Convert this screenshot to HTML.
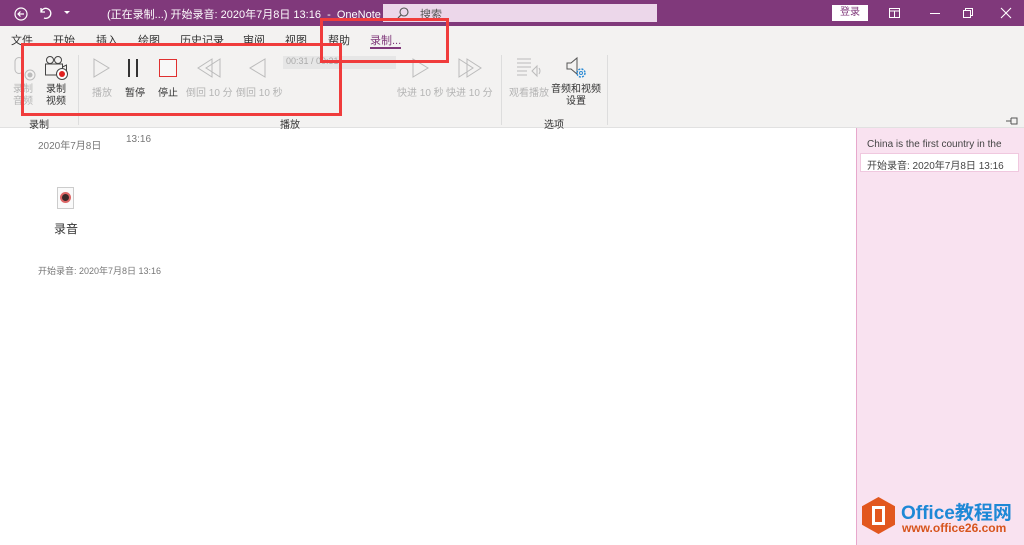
<!DOCTYPE html>
<html><head><meta charset="utf-8"><style>
*{margin:0;padding:0;box-sizing:border-box}
body{width:1024px;height:545px;overflow:hidden;background:#fff;font-family:"Liberation Sans","Noto Sans CJK SC",sans-serif;position:relative;font-size:10px;color:#333}
.a{position:absolute;white-space:nowrap}
.g{color:#b4b4b4}
svg{position:absolute;overflow:visible}
</style></head><body>
<div class="a" style="left:0;top:0;width:1024px;height:26px;background:#80397b"></div>
<svg style="left:14px;top:7px" width="14" height="14"><circle cx="7" cy="7" r="6" fill="none" stroke="#fff" stroke-width="1.2"/><path d="M10 7H4M6.5 4.5L4 7l2.5 2.5" fill="none" stroke="#fff" stroke-width="1.2"/></svg>
<svg style="left:38px;top:6px" width="14" height="14"><path d="M3 2v4h4M3 6a5 5 0 1 1 3 6" fill="none" stroke="#fff" stroke-width="1.3"/></svg>
<svg style="left:64px;top:11px" width="7" height="5"><path d="M0 0h6L3 3z" fill="#fff"/></svg>
<div class="a" style="left:107px;top:6px;color:#fff;font-size:11px">(正在录制...) 开始录音: 2020年7月8日 13:16 &nbsp;- &nbsp;OneNote</div>
<div class="a" style="left:383px;top:4px;width:274px;height:18px;background:#ecd7ea"></div>
<svg style="left:397px;top:7px" width="12" height="12"><circle cx="7" cy="5" r="4" fill="none" stroke="#555" stroke-width="1.1"/><path d="M4 8L1 11" stroke="#555" stroke-width="1.2"/></svg>
<div class="a" style="left:420px;top:6px;font-size:11px;color:#555">搜索</div>
<div class="a" style="left:832px;top:5px;width:36px;height:16px;background:#fff;color:#80397b;font-size:10px;text-align:center;line-height:16px">登录</div>
<svg style="left:889px;top:8px" width="11" height="10"><rect x="0.5" y="0.5" width="10" height="9" fill="none" stroke="#fff"/><path d="M0 3h11M5.5 3v6" stroke="#fff"/></svg>
<div class="a" style="left:930px;top:13px;width:10px;height:1px;background:#fff"></div>
<svg style="left:963px;top:8px" width="10" height="10"><rect x="0.5" y="2.5" width="7" height="7" fill="none" stroke="#fff"/><path d="M2.5 2.5v-2h7v7h-2" fill="none" stroke="#fff"/></svg>
<svg style="left:1001px;top:8px" width="10" height="10"><path d="M0 0L10 10M10 0L0 10" stroke="#fff" stroke-width="1.1"/></svg>
<div class="a" style="left:0;top:26px;width:1024px;height:102px;background:#f3f2f1;border-bottom:1px solid #e1e1e1"></div>
<div class="a" style="left:11px;top:32px;font-size:11px">文件</div>
<div class="a" style="left:53px;top:32px;font-size:11px">开始</div>
<div class="a" style="left:96px;top:32px;font-size:11px">插入</div>
<div class="a" style="left:138px;top:32px;font-size:11px">绘图</div>
<div class="a" style="left:180px;top:32px;font-size:11px">历史记录</div>
<div class="a" style="left:243px;top:32px;font-size:11px">审阅</div>
<div class="a" style="left:285px;top:32px;font-size:11px">视图</div>
<div class="a" style="left:328px;top:32px;font-size:11px">帮助</div>
<div class="a" style="left:370px;top:32px;font-size:11px;color:#80397b">录制...</div>
<div class="a" style="left:370px;top:47px;width:31px;height:2px;background:#80397b"></div>
<!-- ribbon -->
<svg style="left:14px;top:57px" width="24" height="24"><rect x="1" y="0.5" width="8" height="16" rx="4" fill="none" stroke="#bbb"/><circle cx="16" cy="18" r="5" fill="none" stroke="#bbb"/><circle cx="16" cy="18" r="2.5" fill="#bbb"/></svg>
<div class="a g" style="left:13px;top:84px;line-height:12px">录制<br>音频</div>
<svg style="left:44px;top:56px" width="26" height="26"><circle cx="6" cy="4" r="3.5" fill="none" stroke="#444"/><circle cx="14" cy="4" r="3.5" fill="none" stroke="#444"/><rect x="1.5" y="8" width="17" height="11" fill="none" stroke="#444"/><path d="M18.5 11l4-2v7l-4-2" fill="none" stroke="#444"/><circle cx="18" cy="18" r="5.5" fill="#fff" stroke="#444"/><circle cx="18" cy="18" r="3" fill="#e02020"/></svg>
<div class="a" style="left:46px;top:84px;line-height:12px">录制<br>视频</div>
<div class="a" style="left:29px;top:116px">录制</div>
<div class="a" style="left:78px;top:55px;width:1px;height:70px;background:#ddd"></div>
<svg style="left:93px;top:58px" width="18" height="20"><path d="M1 1L16 10L1 19z" fill="none" stroke="#bbb"/></svg>
<div class="a g" style="left:92px;top:84px">播放</div>
<div class="a" style="left:128px;top:59px;width:2px;height:18px;background:#333"></div>
<div class="a" style="left:136px;top:59px;width:2px;height:18px;background:#333"></div>
<div class="a" style="left:125px;top:84px">暂停</div>
<div class="a" style="left:159px;top:59px;width:18px;height:18px;border:1.5px solid #e03030;background:#f8f8f8"></div>
<div class="a" style="left:158px;top:84px">停止</div>
<svg style="left:198px;top:58px" width="24" height="20"><path d="M22 1v18L8 10z M14 1v18L0 10z" fill="none" stroke="#bbb"/></svg>
<div class="a g" style="left:186px;top:84px">倒回 10 分</div>
<svg style="left:249px;top:58px" width="18" height="20"><path d="M16 1v18L1 10z" fill="none" stroke="#bbb"/></svg>
<div class="a g" style="left:236px;top:84px">倒回 10 秒</div>
<div class="a" style="left:283px;top:56px;width:113px;height:13px;background:#e6e6e6;color:#aaa;font-size:9px;padding-left:3px">00:31 / 00:31</div>
<svg style="left:412px;top:58px" width="18" height="20"><path d="M1 1L16 10L1 19z" fill="none" stroke="#bbb"/></svg>
<div class="a g" style="left:397px;top:84px">快进 10 秒</div>
<svg style="left:458px;top:58px" width="24" height="20"><path d="M1 1v18L15 10z M9 1v18L23 10z" fill="none" stroke="#bbb"/></svg>
<div class="a g" style="left:446px;top:84px">快进 10 分</div>
<div class="a" style="left:280px;top:116px">播放</div>
<div class="a" style="left:501px;top:55px;width:1px;height:70px;background:#ddd"></div>
<svg style="left:516px;top:58px" width="26" height="22"><path d="M1 1h14M1 5h14M1 9h14M1 13h10M1 17h10M21 8l-5 5 5 5zM23 10q2 3 0 6" fill="none" stroke="#bbb"/></svg>
<div class="a g" style="left:509px;top:84px">观看播放</div>
<svg style="left:566px;top:57px" width="24" height="24"><path d="M1 6h4l6-5v16l-6-5H1z" fill="none" stroke="#555"/><circle cx="15" cy="16" r="4" fill="none" stroke="#2a8ad4" stroke-width="1.5" stroke-dasharray="2 1.2"/><circle cx="15" cy="16" r="1.5" fill="none" stroke="#2a8ad4"/></svg>
<div class="a" style="left:551px;top:84px;line-height:12px;text-align:center">音频和视频<br>设置</div>
<div class="a" style="left:544px;top:116px">选项</div>
<div class="a" style="left:607px;top:55px;width:1px;height:70px;background:#ddd"></div>
<svg style="left:1006px;top:117px" width="12" height="8"><path d="M0 4h5M5 1v6M5 1h6v6H5" fill="none" stroke="#555"/></svg>
<!-- red boxes -->
<div class="a" style="left:21px;top:43px;width:321px;height:73px;border:3px solid #f03c3c"></div>
<div class="a" style="left:320px;top:18px;width:129px;height:45px;border:3px solid #f03c3c"></div>
<!-- content -->
<div class="a" style="left:38px;top:137px;color:#777">2020年7月8日</div>
<div class="a" style="left:126px;top:134px;color:#777">13:16</div>
<div class="a" style="left:57px;top:187px;width:17px;height:22px;border:1px solid #ccc;background:#fafafa"></div>
<div class="a" style="left:60px;top:192px;width:11px;height:11px;border-radius:50%;background:#3a2a2a;border:2px solid #d66"></div>
<div class="a" style="left:54px;top:220px;font-size:12px;color:#333">录音</div>
<div class="a" style="left:38px;top:264px;color:#777;font-size:9px">开始录音: 2020年7月8日 13:16</div>
<!-- right pane -->
<div class="a" style="left:856px;top:128px;width:168px;height:417px;background:#f9e2f0;border-left:1px solid #e7a8cc"></div>
<div class="a" style="left:867px;top:139px;font-size:10px;color:#444">China is the first country in the</div>
<div class="a" style="left:860px;top:153px;width:159px;height:19px;background:#fff;border:1px solid #f0c8df;padding:3px 6px;font-size:10px;color:#444">开始录音: 2020年7月8日 13:16</div>
<div class="a" style="left:862px;top:497px;width:33px;height:37px;background:#e2571e;clip-path:polygon(50% 0,100% 25%,100% 75%,50% 100%,0 75%,0 25%)"></div>
<div class="a" style="left:872px;top:506px;width:13px;height:19px;border:3px solid #fff"></div>
<div class="a" style="left:901px;top:498px;font-size:19px;font-weight:bold;color:#1e88d6">Office教程网</div>
<div class="a" style="left:902px;top:521px;font-size:12px;font-weight:bold;color:#d7541c">www.office26.com</div>
</body></html>
